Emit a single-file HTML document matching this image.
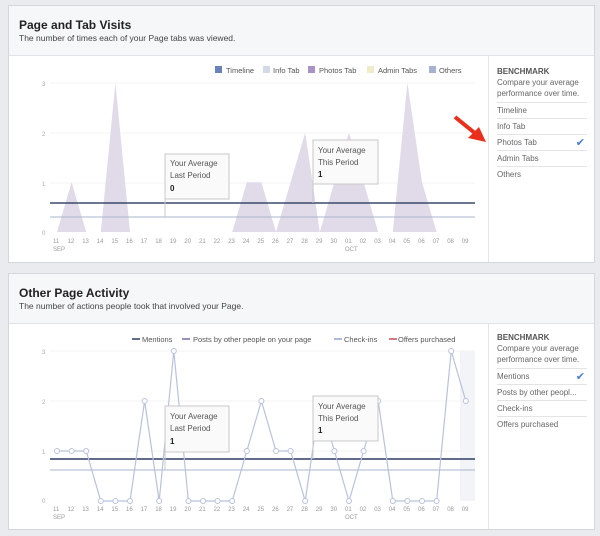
<!DOCTYPE html>
<html><head><style>
body{margin:0;width:600px;height:536px;background:#e9ebef;font-family:"Liberation Sans",sans-serif;overflow:hidden;position:relative}
.card{position:absolute;left:8px;width:587px;background:#fff;border:1px solid #d3d6db;box-sizing:border-box}
.hd{background:#f6f7f9;border-bottom:1px solid #e1e3e8;height:50px;box-sizing:border-box;padding:12px 10px 0}
.hd b{font-size:12px;color:#222;display:block;line-height:14px}
.hd span{font-size:8.5px;color:#444;display:block;line-height:12px}
.bm{position:absolute;left:479px;top:50px;bottom:0;width:1px;background:#e5e6e9}
.side{position:absolute;left:488px;width:90px;font-size:8px;color:#666}
.side .t{font-weight:bold;color:#555}
.side .i{border-top:1px solid #e3e4e8;height:15px;line-height:15px;position:relative}
.chk{position:absolute;right:2px;top:1px;color:#4a7bd9;font-size:11px}
svg{position:absolute;left:0;top:0}
</style></head><body>
<div class="card" style="top:5px;height:258px">
<div class="hd"><b>Page and Tab Visits</b><span>The number of times each of your Page tabs was viewed.</span></div>
<div class="bm"></div>
<div class="side" style="top:61px"><div class="t">BENCHMARK</div><div style="line-height:11px;margin:1px 0 3px">Compare your average performance over time.</div>
<div class="i">Timeline</div><div class="i">Info Tab</div><div class="i">Photos Tab<span class="chk">✔</span></div><div class="i">Admin Tabs</div><div class="i" style="border-bottom:none">Others</div></div>
</div>
<div class="card" style="top:273px;height:257px">
<div class="hd"><b>Other Page Activity</b><span>The number of actions people took that involved your Page.</span></div>
<div class="bm"></div>
<div class="side" style="top:59px"><div class="t">BENCHMARK</div><div style="line-height:11px;margin:1px 0 3px">Compare your average performance over time.</div>
<div class="i">Mentions<span class="chk">✔</span></div><div class="i">Posts by other peopl...</div><div class="i">Check-ins</div><div class="i" style="border-bottom:none">Offers purchased</div></div>
</div>
<svg width="600" height="536" font-family="Liberation Sans, sans-serif">
<g font-size="7.5" fill="#555">
<rect x="215" y="66" width="7" height="7" fill="#6b84b8"/><text x="226" y="73">Timeline</text>
<rect x="263" y="66" width="7" height="7" fill="#d3d9e6"/><text x="273" y="73">Info Tab</text>
<rect x="308" y="66" width="7" height="7" fill="#a993c4"/><text x="319" y="73">Photos Tab</text>
<rect x="367" y="66" width="7" height="7" fill="#f0ebcb"/><text x="378" y="73">Admin Tabs</text>
<rect x="429" y="66" width="7" height="7" fill="#a6b3d0"/><text x="439" y="73">Others</text>
</g>
<g stroke="#f3f3f5" stroke-width="1"><line x1="50" y1="83" x2="475" y2="83"/><line x1="50" y1="133" x2="475" y2="133"/><line x1="50" y1="183" x2="475" y2="183"/></g>
<g font-size="6" fill="#aaa"><text x="42" y="86">3</text><text x="42" y="136">2</text><text x="42" y="186">1</text><text x="42" y="235">0</text></g>
<polygon id="area" fill="#e1dbe9" points=""/>
<line x1="50" y1="203" x2="475" y2="203" stroke="#3b4a6b" stroke-width="1.5"/>
<line x1="50" y1="217" x2="475" y2="217" stroke="#aab4cc" stroke-width="1"/>
<g font-size="6" fill="#999" id="ax1"></g>
<g stroke="#c8c8c8"><rect x="165" y="154" width="64" height="45" fill="#fafafa"/><line x1="165" y1="199" x2="165" y2="217"/><rect x="313" y="140" width="65" height="44" fill="#fafafa"/><line x1="313" y1="184" x2="313" y2="203"/></g>
<g font-size="8" fill="#555"><text x="170" y="166">Your Average</text><text x="170" y="178">Last Period</text><text x="170" y="191" font-weight="bold" fill="#222">0</text>
<text x="318" y="153">Your Average</text><text x="318" y="165">This Period</text><text x="318" y="177" font-weight="bold" fill="#222">1</text></g>
<path d="M455,117 L476,134" stroke="#e8301c" stroke-width="4"/><polygon points="486,142 468,138 479,127" fill="#e8301c"/>

<g font-size="7.5" fill="#555">
<line x1="132" y1="339" x2="140" y2="339" stroke="#2c3c64" stroke-width="1.5"/><text x="142" y="342">Mentions</text>
<line x1="182" y1="339" x2="190" y2="339" stroke="#7a68a8" stroke-width="1.5"/><text x="193" y="342">Posts by other people on your page</text>
<line x1="334" y1="339" x2="342" y2="339" stroke="#8fa6d0" stroke-width="1.5"/><text x="344" y="342">Check-ins</text>
<line x1="389" y1="339" x2="397" y2="339" stroke="#c0505a" stroke-width="1.5"/><text x="398" y="342">Offers purchased</text>
</g>
<rect x="460" y="351" width="15" height="150" fill="#f3f4f8"/>
<g stroke="#f3f3f5"><line x1="50" y1="351" x2="475" y2="351"/><line x1="50" y1="401" x2="475" y2="401"/><line x1="50" y1="451" x2="475" y2="451"/></g>
<g font-size="6" fill="#aaa"><text x="42" y="354">3</text><text x="42" y="404">2</text><text x="42" y="454">1</text><text x="42" y="503">0</text></g>
<line x1="50" y1="459" x2="475" y2="459" stroke="#2c3c64" stroke-width="1.5"/>
<line x1="50" y1="470" x2="475" y2="470" stroke="#aab4cc" stroke-width="1"/>
<polyline id="pl" fill="none" stroke="#b8c2dc" stroke-width="1.2" points=""/>
<g id="pts" fill="#fff" stroke="#b8c2dc"></g>
<g font-size="6" fill="#999" id="ax2"></g>
<g stroke="#c8c8c8"><rect x="165" y="406" width="64" height="46" fill="#fafafa"/><line x1="165" y1="452" x2="165" y2="470"/><rect x="313" y="396" width="65" height="45" fill="#fafafa"/><line x1="313" y1="441" x2="313" y2="459"/></g>
<g font-size="8" fill="#555"><text x="170" y="419">Your Average</text><text x="170" y="431">Last Period</text><text x="170" y="444" font-weight="bold" fill="#222">1</text>
<text x="318" y="409">Your Average</text><text x="318" y="421">This Period</text><text x="318" y="433" font-weight="bold" fill="#222">1</text></g>
</svg>
<script>
var d=["11","12","13","14","15","16","17","18","19","20","21","22","23","24","25","26","27","28","29","30","01","02","03","04","05","06","07","08","09"];
var ns="http://www.w3.org/2000/svg";
function ax(id,y){var g=document.getElementById(id);d.forEach(function(s,i){var t=document.createElementNS(ns,"text");t.setAttribute("x",57+14.6*i-4);t.setAttribute("y",y);t.textContent=s;g.appendChild(t);});
[["SEP",57],["OCT",349]].forEach(function(a){var t=document.createElementNS(ns,"text");t.setAttribute("x",a[1]-4);t.setAttribute("y",y+8);t.textContent=a[0];g.appendChild(t);});}
ax("ax1",243);ax("ax2",511);
var a1=[0,1,0,0,3,0,0,0,0,0,0,0,0,1,1,0,1,2,0,1,2,1,0,0,3,1,0,0,0];
var ap=["57,232"];a1.forEach(function(a,i){ap.push((57+14.6*i)+","+(232-49.7*a));});ap.push((57+14.6*28)+",232");
document.getElementById("area").setAttribute("points",ap.join(" "));
var v=[1,1,1,0,0,0,2,0,3,0,0,0,0,1,2,1,1,0,2,1,0,1,2,0,0,0,0,3,2];
var p=[],g=document.getElementById("pts");
v.forEach(function(a,i){var x=57+14.6*i,y=501-50*a;p.push(x+","+y);var c=document.createElementNS(ns,"circle");c.setAttribute("cx",x);c.setAttribute("cy",y);c.setAttribute("r",2.5);g.appendChild(c);});
document.getElementById("pl").setAttribute("points",p.join(" "));
</script>
</body></html>
